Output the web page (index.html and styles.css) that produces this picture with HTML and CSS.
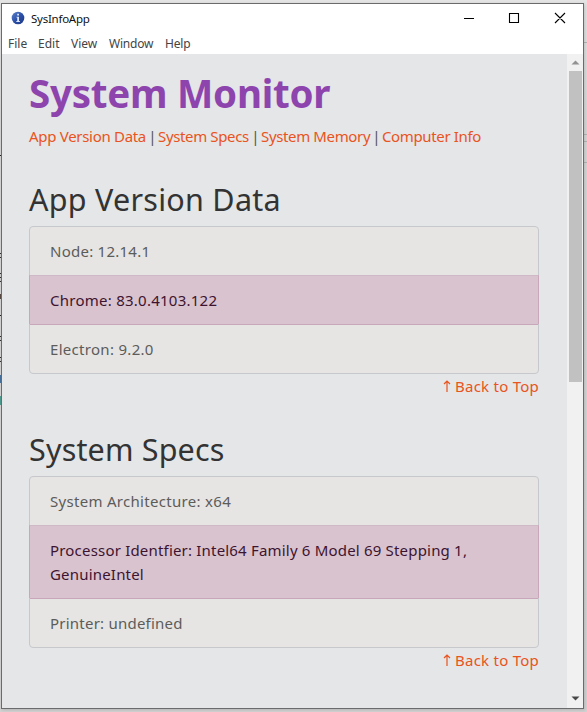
FILE: index.html
```html
<!DOCTYPE html>
<html lang="en">
<head>
<meta charset="utf-8">
<title>SysInfoApp</title>
<link rel="stylesheet" href="styles.css">
</head>
<body>
<div class="window">
  <header class="titlebar">
    <svg class="app-icon" width="14" height="14" viewBox="0 0 14 14">
      <defs><linearGradient id="ball" x1="0" y1="0" x2="1" y2="1"><stop offset="0" stop-color="#5f83cc"/><stop offset=".5" stop-color="#2c50a8"/><stop offset="1" stop-color="#1c3685"/></linearGradient></defs>
      <circle cx="7" cy="7" r="6.3" fill="url(#ball)"/>
      <path d="M6.2 2.8h1.8v1.7H6.2zM5.4 5.7H8v4.4h.9v1H5.3v-1h.9V6.6h-.8z" fill="#dbe5f8"/>
    </svg>
    <span class="app-name">SysInfoApp</span>
    <svg class="controls" width="102" height="12" viewBox="0 0 102 12" fill="none" stroke="#000" stroke-width="1.1">
      <path d="M0 6.5h10M45.5 1.5h9v9h-9zM91 1l10 10M101 1L91 11"/>
    </svg>
  </header>
  <nav class="menubar">
    <span class="m-file">File</span><span class="m-edit">Edit</span><span class="m-view">View</span><span class="m-window">Window</span><span class="m-help">Help</span>
  </nav>
  <div class="viewport">
    <main class="page">
      <h1>System Monitor</h1>
      <p class="links"><a class="l1">App Version Data</a><i>|</i><a class="l2">System Specs</a><i>|</i><a class="l3">System Memory</a><i>|</i><a class="l4">Computer Info</a></p>
      <section>
        <h2 class="h-version">App Version Data</h2>
        <ul>
          <li><span class="t-node">Node: 12.14.1</span></li>
          <li class="active"><span class="t-chrome">Chrome: 83.0.4103.122</span></li>
          <li><span class="t-electron">Electron: 9.2.0</span></li>
        </ul>
        <a class="back"><svg width="8" height="12" viewBox="0 0 8 12"><path d="M4 12V1M1 4l3-3 3 3"/></svg><span>Back to Top</span></a>
      </section>
      <section>
        <h2 class="h-specs">System Specs</h2>
        <ul>
          <li><span class="t-arch">System Architecture: x64</span></li>
          <li class="active"><span class="t-cpu">Processor Identfier: Intel64 Family 6 Model 69 Stepping 1,<br>GenuineIntel</span></li>
          <li><span class="t-printer">Printer: undefined</span></li>
        </ul>
        <a class="back"><svg width="8" height="12" viewBox="0 0 8 12"><path d="M4 12V1M1 4l3-3 3 3"/></svg><span>Back to Top</span></a>
      </section>
    </main>
    <div class="scrollbar">
      <svg width="9" height="5" viewBox="0 0 9 5"><path d="M0.5 4.5L4.5 .5l4 4z" fill="#929292"/></svg>
      <div class="thumb"></div>
      <svg class="down" width="9" height="5" viewBox="0 0 9 5"><path d="M.5 .5l4 4 4-4z" fill="#484848"/></svg>
    </div>
  </div>
</div>
</body>
</html>
```
FILE: styles.css
```css
* { box-sizing: border-box; }
body {
  margin: 0;
  height: 712px;
  padding: 3px 3px 3px 1px;
  overflow: hidden;
  /* slivers of the desktop behind the window, then its base tone */
  background:
    linear-gradient(#222, #222) 0 155px / 1px 1px no-repeat,
    repeating-linear-gradient(#333 0 1px, #ccc 1px 4px) 0 253px / 1px 5px no-repeat,
    repeating-linear-gradient(#333 0 1px, #ccc 1px 4px) 0 273px / 1px 9px no-repeat,
    linear-gradient(#5a4a44, #5a4a44) 0 294px / 1px 5px no-repeat,
    linear-gradient(#222, #222) 0 315px / 1px 1px no-repeat,
    repeating-linear-gradient(#333 0 1px, #ccc 1px 4px) 0 336px / 1px 5px no-repeat,
    repeating-linear-gradient(#333 0 1px, #ccc 1px 4px) 0 357px / 1px 5px no-repeat,
    linear-gradient(#47719c, #47719c) 0 375px / 1px 8px no-repeat,
    linear-gradient(#4f9c90, #4f9c90) 0 396px / 1px 9px no-repeat,
    linear-gradient(#b4b4b4, #b4b4b4) 100% 42px / 3px 1px no-repeat,
    linear-gradient(#b4b4b4, #b4b4b4) 100% 134px / 3px 1px no-repeat,
    linear-gradient(#b4b4b4, #b4b4b4) 100% 141px / 3px 1px no-repeat,
    linear-gradient(#b4b4b4, #b4b4b4) 100% 162px / 3px 1px no-repeat,
    linear-gradient(#e4e4e4, #d6d6d6 130px, #d2d2d2);
  font-family: "Noto Sans", "Open Sans", sans-serif;
}
.window {
  width: 583px;
  height: 706px;
  border: 1px solid #6a6b6d;
  background: #fff;
  display: flex;
  flex-direction: column;
  box-shadow: 1px 1px 3px rgba(0, 0, 0, .15);
}
.titlebar {
  height: 30px;
  display: flex;
  align-items: center;
  padding: 0 17px 2px 9px;
  font-size: 12px;
}
.app-name { margin-left: 6px; color: #111; letter-spacing: -.25px; font-size: 11.5px; }
.controls { margin-left: auto; }
.menubar {
  height: 20px;
  display: flex;
  padding-left: 6px;
  font-size: 12px;
  line-height: 19px;
  color: #444;
}
.menubar span { white-space: nowrap; }
.m-file { width: 30px; }
.m-edit { width: 33px; }
.m-view { width: 38px; }
.m-window { width: 56px; letter-spacing: -.2px; }
.m-help { letter-spacing: -.2px; }
.viewport { flex: 1; display: flex; background: #e4e6e8; }
.page { width: 565px; padding: 15px 28px 0 27px; color: #333; }
h1, h2, p, ul { margin: 0; }
h1 {
  font-size: 38.5px;
  line-height: 48px;
  font-weight: 700;
  color: #8e44ad;
  white-space: nowrap;
  letter-spacing: -.25px;
}
.links {
  height: 24px;
  margin-top: 7px;
  line-height: 24px;
  font-size: 15px;
  display: flex;
  white-space: nowrap;
}
.links i { width: 11px; text-align: center; font-style: normal; color: #555; }
.links a, .back { color: #e95420; }
.l1 { width: 118px; letter-spacing: -.3px; }
.l2 { width: 92px; letter-spacing: -.36px; }
.l3 { width: 110px; letter-spacing: -.36px; }
.l4 { letter-spacing: -.36px; }
section { margin-top: 32px; }
h2 {
  height: 38px;
  line-height: 38px;
  margin-bottom: 8px;
  font-size: 30.5px;
  font-weight: 400;
  white-space: nowrap;
}
.h-version { letter-spacing: .27px; }
.h-specs { letter-spacing: .17px; }
ul {
  list-style: none;
  padding: 0;
  border: 1px solid #c6c8cc;
  border-radius: 4px;
  background: #e6e5e4;
}
li {
  padding: 12px 20px;
  line-height: 24px;
  font-size: 15px;
  color: #5c5c5a;
  white-space: nowrap;
}
li + li { border-top: 1px solid #cacacc; }
li.active {
  margin: 0 -1px;
  border-left: 1px solid #c7a7b9;
  border-right: 1px solid #c7a7b9;
  background: #d9c3cf;
  border-top-color: #d0b9c6;
  color: #3d1430;
}
li.active + li { border-top-color: #c7a7b9; }
.t-node, .t-chrome { letter-spacing: .25px; }
.t-electron, .t-arch { letter-spacing: .3px; }
.t-cpu { letter-spacing: .19px; }
.t-printer { letter-spacing: .23px; }
.back {
  height: 24px;
  display: flex;
  justify-content: flex-end;
  align-items: center;
  gap: 4px;
  font-size: 15px;
  line-height: 24px;
}
.back span { letter-spacing: .25px; }
.back svg { fill: none; stroke: #e95420; stroke-width: 1.2; }
.scrollbar {
  width: 16px;
  background: #f1f1f1;
  display: flex;
  flex-direction: column;
  align-items: center;
  padding: 6px 0 7px;
}
.thumb { width: 13px; height: 311px; margin-top: 6px; background: #c1c1c1; }
.down { margin-top: auto; }
```
